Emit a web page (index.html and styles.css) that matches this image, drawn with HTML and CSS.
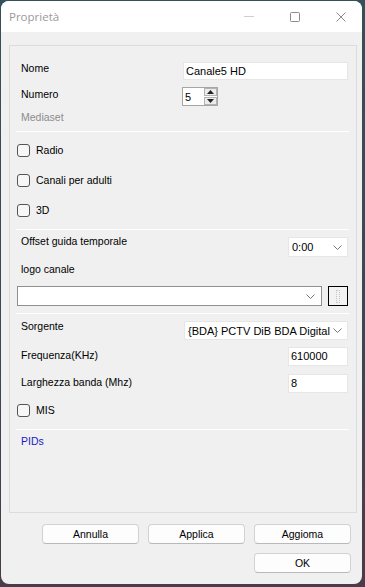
FILE: index.html
```html
<!DOCTYPE html>
<html>
<head>
<meta charset="utf-8">
<link rel="stylesheet" href="styles.css">
</head>
<body>
<div class="window">
  <div class="titlebar">
    <span class="title">Proprietà</span>
    <div class="controls">
      <svg class="ic ic-min" width="10" height="10" viewBox="0 0 10 10"><line x1="0" y1="4.5" x2="10" y2="4.5" stroke="#cfcfcf" stroke-width="1"/></svg>
      <svg class="ic ic-max" width="10" height="10" viewBox="0 0 10 10"><rect x="0.5" y="0.5" width="9" height="9" rx="1" fill="none" stroke="#8a8a8a" stroke-width="1"/></svg>
      <svg class="ic ic-close" width="10" height="10" viewBox="0 0 10 10"><path d="M0.5 0.5 L9.5 9.5 M9.5 0.5 L0.5 9.5" stroke="#8a8a8a" stroke-width="1" fill="none"/></svg>
    </div>
  </div>
  <div class="content">
    <div class="group">
      <div class="row r-nome">
        <span class="lbl">Nome</span>
        <div class="field f-nome">Canale5 HD</div>
      </div>
      <div class="row r-num">
        <span class="lbl lbl-pad lbl-fixed">Numero</span>
        <div class="numeric">
          <span class="numval">5</span>
          <div class="spin">
            <div class="spinbtn"><svg width="7" height="4" viewBox="0 0 7 4"><path d="M0 4 L3.5 0 L7 4 Z" fill="#222"/></svg></div>
            <div class="spinbtn"><svg width="7" height="4" viewBox="0 0 7 4"><path d="M0 0 L3.5 4 L7 0 Z" fill="#222"/></svg></div>
          </div>
        </div>
      </div>
      <div class="row r-media"><span class="lbl gray">Mediaset</span></div>
      <div class="sep s1"></div>
      <div class="row chk c1"><span class="box"></span><span class="chklbl">Radio</span></div>
      <div class="row chk c2"><span class="box"></span><span class="chklbl">Canali per adulti</span></div>
      <div class="row chk c2"><span class="box"></span><span class="chklbl">3D</span></div>
      <div class="sep s2"></div>
      <div class="row r-offset">
        <span class="lbl">Offset guida temporale</span>
        <div class="combo c-offset"><span class="ctext">0:00</span><svg class="chev" width="9" height="5" viewBox="0 0 9 5"><path d="M0.5 0.5 L4.5 4.5 L8.5 0.5" fill="none" stroke="#777" stroke-width="1"/></svg></div>
      </div>
      <div class="row r-logo"><span class="lbl">logo canale</span></div>
      <div class="row r-logocombo">
        <div class="combo c-logo"><span class="ctext"></span><svg class="chev" width="9" height="5" viewBox="0 0 9 5"><path d="M0.5 0.5 L4.5 4.5 L8.5 0.5" fill="none" stroke="#777" stroke-width="1"/></svg></div>
        <div class="browse"><span class="focusdots"></span></div>
      </div>
      <div class="sep s3"></div>
      <div class="row r-src">
        <span class="lbl">Sorgente</span>
        <div class="combo c-src"><span class="ctext srctext">{BDA} PCTV DiB BDA Digital</span><svg class="chev" width="9" height="5" viewBox="0 0 9 5"><path d="M0.5 0.5 L4.5 4.5 L8.5 0.5" fill="none" stroke="#777" stroke-width="1"/></svg></div>
      </div>
      <div class="row r-freq">
        <span class="lbl lbl-pad2">Frequenza(KHz)</span>
        <div class="field f-small">610000</div>
      </div>
      <div class="row r-band">
        <span class="lbl lbl-pad2">Larghezza banda (Mhz)</span>
        <div class="field f-small">8</div>
      </div>
      <div class="row chk c3"><span class="box"></span><span class="chklbl">MIS</span></div>
      <div class="sep s4"></div>
      <div class="row r-pids"><span class="lbl link">PIDs</span></div>
    </div>
    <div class="buttons">
      <div class="btnrow">
        <div class="btn">Annulla</div>
        <div class="btn">Applica</div>
        <div class="btn">Aggioma</div>
      </div>
      <div class="btnrow r2">
        <div class="btn">OK</div>
      </div>
    </div>
  </div>
</div>
</body>
</html>
```
FILE: styles.css
```css
html, body {
  margin: 0;
  padding: 0;
}
body {
  width: 365px;
  height: 587px;
  background: linear-gradient(180deg, #35505a 0%, #3b4754 60%, #4a3c48 100%);
  overflow: hidden;
  font-family: "Liberation Sans", Arial, sans-serif;
  font-size: 10.5px;
  color: #000;
}
.window {
  margin: 1px 0 0 1px;
  width: 361px;
  height: 583px;
  border-radius: 8px;
  overflow: hidden;
  background: #f0f0f0;
  display: flex;
  flex-direction: column;
}
.titlebar {
  height: 31px;
  flex: none;
  background: #fff;
  display: flex;
  align-items: center;
}
.title {
  padding-left: 8px;
  font-family: "Open Sans", "Noto Sans", sans-serif;
  font-size: 11.5px;
  color: #9a9a9a;
}
.controls {
  margin-left: auto;
  padding-right: 16px;
  display: flex;
  align-items: center;
}
.ic { display: block; }
.ic-min { margin-right: 36px; }
.ic-max { margin-right: 36px; }
.content {
  padding: 13px 0 0 8px;
}
.group {
  box-sizing: border-box;
  width: 348px;
  height: 468px;
  border: 1px solid #dcdcdc;
  padding: 0 8px 0 7px;
  display: flex;
  flex-direction: column;
}
.row {
  display: flex;
  align-items: flex-start;
  flex: none;
}
.lbl {
  margin-left: 4px;
  line-height: 13px;
  white-space: nowrap;
}
.lbl-pad { padding-top: 1px; }
.lbl-pad2 { padding-top: 2px; }
.lbl-fixed { flex: 0 0 161px; }
.gray { color: #8c8c8c; }
.link { color: #1c1cc4; }

.r-nome { margin-top: 16px; height: 18px; }
.r-num { margin-top: 7px; height: 19px; }
.r-media { margin-top: 5px; height: 13px; }
.sep {
  flex: none;
  height: 1px;
  background: #fff;
  margin-left: -1px;
  margin-right: -1px;
}
.s1 { margin-top: 7px; }
.s2 { margin-top: 12px; }
.s3 { margin-top: 7px; }
.s4 { margin-top: 12px; }

.chk { height: 13px; align-items: center; }
.c1 { margin-top: 12px; }
.c2 { margin-top: 17px; }
.c3 { margin-top: 11px; }
.box {
  box-sizing: border-box;
  width: 13px;
  height: 13px;
  border: 1px solid #555;
  border-radius: 3px;
  background: #f7f7f7;
  flex: none;
}
.chklbl {
  margin-left: 6px;
  line-height: 13px;
}

.field {
  box-sizing: border-box;
  margin-left: auto;
  background: #fff;
  border: 1px solid #e6e6e6;
  padding-left: 2px;
  line-height: 16px;
  white-space: nowrap;
}
.f-nome { width: 165px; height: 18px; font-size: 11px; }
.f-small { width: 60px; height: 19px; line-height: 17px; font-size: 11px; }

.numeric {
  box-sizing: border-box;
  width: 36px;
  height: 19px;
  background: #fff;
  border: 1px solid #a6a6a6;
  display: flex;
  align-items: center;
  font-size: 11px;
}
.numval {
  padding-left: 2px;
  width: 18px;
  line-height: 16px;
}
.spin {
  display: flex;
  flex-direction: column;
  margin-left: 1px;
  gap: 1px;
}
.spinbtn {
  box-sizing: border-box;
  width: 13px;
  height: 8px;
  border: 1px solid #b4b4b4;
  background: #ececec;
  display: flex;
  align-items: center;
  justify-content: center;
}
.spinbtn svg { display: block; }

.combo {
  box-sizing: border-box;
  margin-left: auto;
  background: #fff;
  border: 1px solid #e6e6e6;
  display: flex;
  align-items: center;
  font-size: 11px;
}
.ctext {
  padding-left: 3px;
  line-height: 16px;
  flex: 1;
  white-space: nowrap;
}
.chev { display: block; margin-right: 5px; flex: none; }
.c-offset { width: 60px; height: 20px; margin-top: 2px; }
.r-offset { margin-top: 5px; height: 22px; }
.r-logo { margin-top: 6px; height: 13px; }
.r-logocombo { margin-top: 10px; height: 20px; }
.c-logo {
  margin-left: 0;
  width: 305px;
  height: 20px;
  border-color: #8f8f8f;
}
.c-logo .chev { margin-right: 6px; }
.browse {
  box-sizing: border-box;
  margin-left: 6px;
  width: 20px;
  height: 20px;
  border: 1px solid #000;
  background: #f3f3f3;
  display: flex;
  align-items: center;
  justify-content: center;
}
.focusdots {
  box-sizing: border-box;
  width: 4px;
  height: 13px;
  border: 1px dotted #c4c4c4;
}
.r-src { margin-top: 6px; height: 20px; }
.c-src { width: 164px; height: 19px; margin-top: 1px; }
.srctext { font-size: 11px; }
.r-freq { margin-top: 7px; height: 19px; }
.r-band { margin-top: 8px; height: 19px; }
.r-pids { margin-top: 5px; height: 13px; }

.buttons {
  padding-right: 11px;
}
.btnrow {
  display: flex;
  justify-content: flex-end;
  gap: 9px;
  margin-top: 11px;
}
.btnrow.r2 { margin-top: 9px; }
.btn {
  box-sizing: border-box;
  width: 97px;
  height: 20px;
  background: #fdfdfd;
  border: 1px solid #d2d2d2;
  border-bottom-color: #b9b9b9;
  border-radius: 4px;
  text-align: center;
  line-height: 18px;
}
```
